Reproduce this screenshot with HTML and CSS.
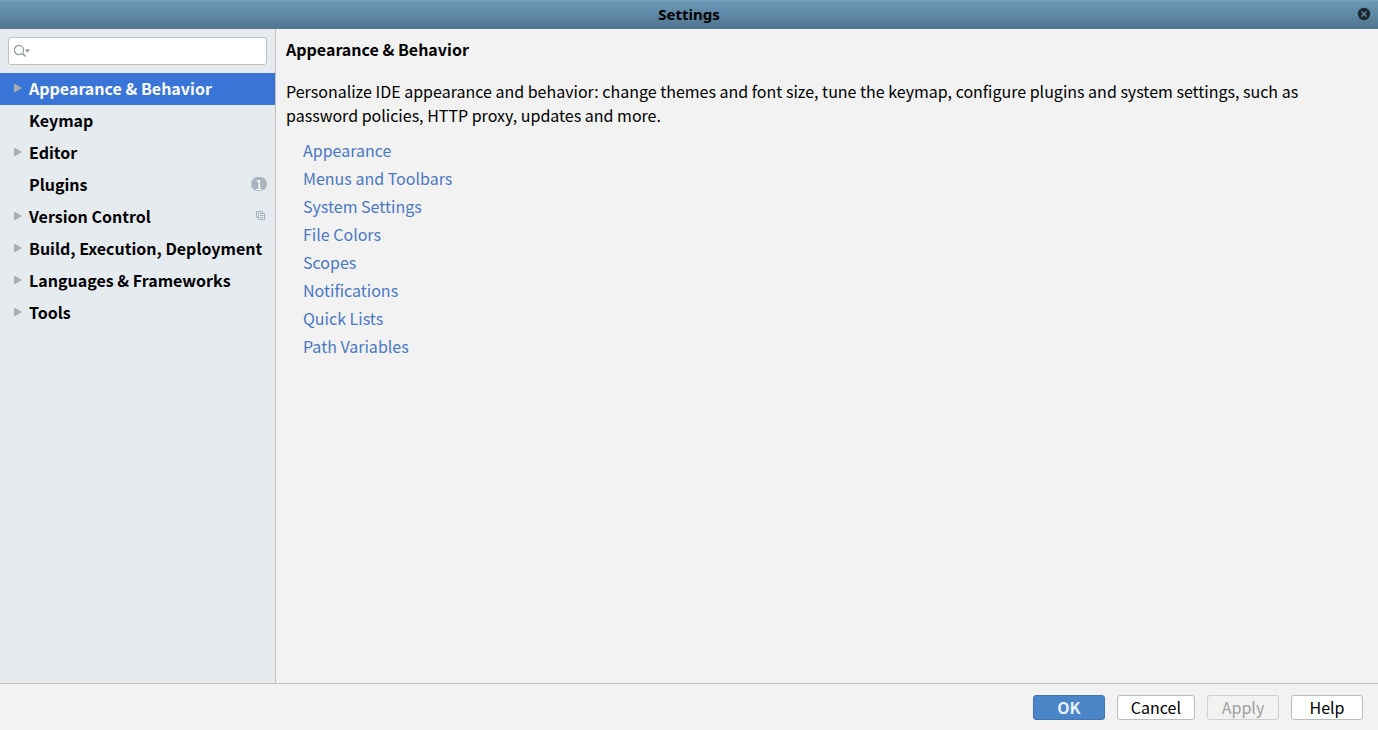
FILE: index.html
```html
<!DOCTYPE html>
<html lang="en">
<head>
<meta charset="utf-8">
<title>Settings</title>
<link rel="stylesheet" href="styles.css">
</head>
<body>
<div class="dialog">
  <header class="titlebar">
    <h1 class="titlebar-text">Settings</h1>
    <button class="close" type="button" aria-label="Close">
      <svg width="14" height="14" viewBox="0 0 14 14"><circle cx="7" cy="7" r="6.2" fill="#1b2830"/><path d="M4.500 4.500l5 5M9.500 4.500l-5 5" stroke="#6590ab" stroke-width="1.300"/></svg>
    </button>
  </header>
  <div class="body">
    <aside class="sidebar">
      <div class="search">
        <svg class="search-icon" width="17" height="14" viewBox="0 0 17 14" fill="none"><circle cx="5" cy="6" r="4.600" stroke="#8d999f" stroke-width="1.200"/><path d="M8.500 9.500l3 3" stroke="#8d999f" stroke-width="1.600"/><path d="M11 5.500h5L13.500 8.500z" fill="#7f8b91"/></svg>
        <input class="search-input" type="text" aria-label="Search settings">
      </div>
      <nav>
        <ul class="tree">
          <li><button type="button" class="node node-parent node-selected">Appearance &amp; Behavior</button></li>
          <li><button type="button" class="node">Keymap</button></li>
          <li><button type="button" class="node node-parent">Editor</button></li>
          <li><button type="button" class="node">Plugins<span class="badge">1</span></button></li>
          <li><button type="button" class="node node-parent">Version Control
            <svg class="project-icon" width="10" height="10" viewBox="0 0 10 10" fill="none" stroke="#a3b0ba"><path d="M2.500 6.500h-2v-6h6v2M2.500 2.500h6v6h-6zM4 4.500h3.500M4 6.500h3.500"/></svg></button></li>
          <li><button type="button" class="node node-parent">Build, Execution, Deployment</button></li>
          <li><button type="button" class="node node-parent">Languages &amp; Frameworks</button></li>
          <li><button type="button" class="node node-parent">Tools</button></li>
        </ul>
      </nav>
    </aside>
    <main class="content">
      <h2 class="heading">Appearance &amp; Behavior</h2>
      <p class="description">Personalize IDE appearance and behavior: change themes and font size, tune the keymap, configure plugins and system settings, such as password policies, HTTP proxy, updates and more.</p>
      <ul class="links">
        <li><a href="#">Appearance</a></li>
        <li><a href="#">Menus and Toolbars</a></li>
        <li><a href="#">System Settings</a></li>
        <li><a href="#">File Colors</a></li>
        <li><a href="#">Scopes</a></li>
        <li><a href="#">Notifications</a></li>
        <li><a href="#">Quick Lists</a></li>
        <li><a href="#">Path Variables</a></li>
      </ul>
    </main>
  </div>
  <footer class="footer">
    <button type="button" class="btn btn-primary">OK</button>
    <button type="button" class="btn">Cancel</button>
    <button type="button" class="btn" disabled>Apply</button>
    <button type="button" class="btn">Help</button>
  </footer>
</div>
</body>
</html>
```
FILE: styles.css
```css
* {
  box-sizing: border-box;
}

body {
  margin: 0;
  background: #f2f2f2;
  color: #000;
  font: 16px/24px "Noto Sans CJK SC", "Noto Sans", sans-serif;
}

button,
input {
  font: inherit;
  color: inherit;
}

ul {
  margin: 0;
  padding: 0;
  list-style: none;
}

.dialog {
  display: flex;
  flex-direction: column;
  min-height: 100vh;
}

.titlebar {
  display: grid;
  grid-template-columns: 1fr auto 1fr;
  align-items: center;
  height: 29px;
  padding: 0 7px 2px;
  border-top: 1px solid #7f9fbd;
  background: linear-gradient(#6b99b7, #50758f);
}

.titlebar-text {
  grid-column: 2;
  margin: 0;
  font: bold 15px/20px "Noto Sans", sans-serif;
}

.close {
  justify-self: end;
  display: flex;
  padding: 0;
  border: 0;
  background: none;
}

.body {
  flex: 1;
  display: flex;
}

.sidebar {
  flex: none;
  width: 276px;
  border-right: 1px solid #bfbfbf;
  background: #e6ebf0;
}

.search {
  display: flex;
  align-items: center;
  height: 28px;
  margin: 8px;
  padding-left: 5px;
  border: 1px solid #c0c0c0;
  border-radius: 3px;
  background: #fff;
}

.search-icon {
  flex: none;
}

.search-input {
  flex: 1;
  min-width: 0;
  padding: 0 4px;
  border: 0;
  outline: 0;
  background: none;
}

.node {
  display: flex;
  align-items: center;
  width: 100%;
  height: 32px;
  padding: 0 8px 2px 14px;
  border: 0;
  background: none;
  font-weight: bold;
  text-align: left;
  white-space: nowrap;
}

.node::before {
  content: "";
  flex: none;
  width: 8px;
  height: 9px;
  margin-right: 7px;
}

.node-parent::before {
  background: #adadad;
  clip-path: polygon(0 0, 100% 50%, 0 100%);
}

.node-selected {
  background: #3875d7;
  color: #fff;
}

.badge {
  width: 16px;
  height: 14px;
  margin-left: auto;
  border-radius: 7px;
  background: #a9b5be;
  color: #fff;
  font-size: 14px;
  font-weight: normal;
  line-height: 14px;
  text-align: center;
}

.project-icon {
  margin: 0 1px 0 auto;
}

.content {
  flex: 1;
  min-width: 0;
  padding: 8px 24px 8px 10px;
}

.heading {
  margin: 0 0 18px;
  font-size: 16px;
  line-height: 24px;
}

.description {
  margin: 0 0 9px;
}

.links {
  padding-left: 17px;
  line-height: 28px;
}

.links a {
  color: #4a78c2;
  text-decoration: none;
}

.footer {
  display: flex;
  justify-content: flex-end;
  gap: 12px;
  padding: 11px 15px 10px;
  border-top: 1px solid #bfbfbf;
}

.btn {
  min-width: 72px;
  height: 25px;
  padding: 0 13px;
  border: 1px solid #bcbcbc;
  border-radius: 3px;
  background: #fff;
  line-height: 23px;
}

.btn-primary {
  border-color: #3d75b8;
  background: #4a86c7;
  color: #e8f0fa;
  font-weight: bold;
}

.btn:disabled {
  border-color: #cfcfcf;
  background: #f2f2f2;
  color: #a0a0a0;
}
```
